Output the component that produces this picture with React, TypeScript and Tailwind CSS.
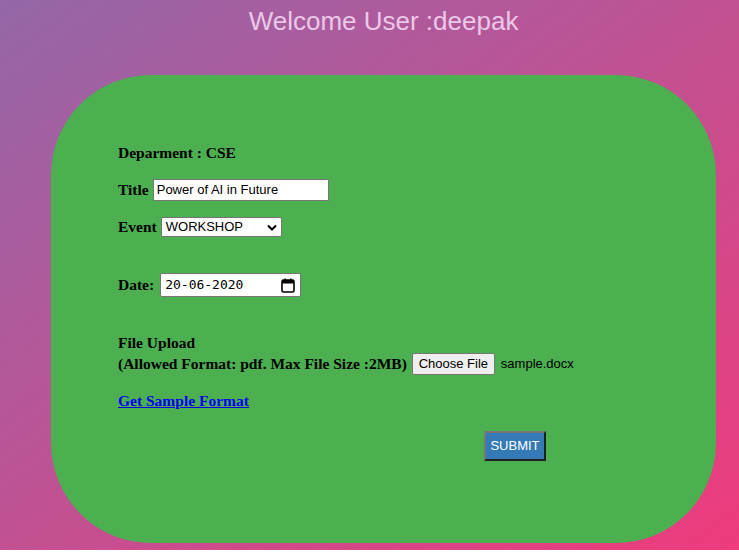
import React from "react";

const serif = { fontFamily: '"Liberation Serif", "Times New Roman", serif' };
const sans = { fontFamily: '"Liberation Sans", Arial, sans-serif' };

export default function App() {
  return (
    <div className="w-[739px] h-[553px] bg-white overflow-hidden">
      <div
        className="h-[550px] bg-[linear-gradient(to_bottom_right,#9467a8,#ee3b7c)] pt-[6px]"
        style={sans}
      >
        {/* Heading */}
        <h1 className="text-center pl-[28px] text-[26px] leading-[30px] text-[#ecc8e8]">
          Welcome User :deepak
        </h1>

        {/* Card */}
        <div className="ml-[51px] mt-[39px] w-[665px] h-[468px] bg-[#4caf50] rounded-[100px] pt-[68px] pl-[67px] font-bold text-black text-[15.5px]" style={serif}>
          <div className="h-[20px] leading-[20px]">Deparment : CSE</div>

          <div className="mt-[16px] flex items-center h-[22px]">
            <span>Title</span>
            <div className="ml-[4px] w-[176px] h-[22px] bg-white border border-[#767676] pl-[3px] text-[13px] leading-[20px] font-normal" style={sans}>
              Power of AI in Future
            </div>
          </div>

          <div className="mt-[16px] flex items-center h-[20px]">
            <span>Event</span>
            <div className="ml-[4px] w-[121px] h-[20px] bg-white border border-[#767676] rounded-[2px] pl-[4px] pr-[4px] flex items-center justify-between text-[13px] font-normal" style={sans}>
              <span>WORKSHOP</span>
              <svg width="10" height="7" viewBox="0 0 10 7">
                <path d="M1 1.5 L5 5.5 L9 1.5" stroke="#000" strokeWidth="2" fill="none" />
              </svg>
            </div>
          </div>

          <div className="mt-[36px] flex items-center h-[24px]">
            <span>Date:</span>
            <div className="ml-[6px] w-[141px] h-[24px] bg-white border border-[#767676] rounded-[2px] pl-[4px] pr-[5px] flex items-center justify-between text-[13px] font-normal" style={{ fontFamily: '"DejaVu Sans Mono", "Liberation Mono", monospace' }}>
              <span>20-06-2020</span>
              <svg width="14" height="15" viewBox="0 0 14 15">
                <rect x="1" y="2" width="12" height="12" rx="1.5" fill="none" stroke="#000" strokeWidth="1.6" />
                <rect x="1" y="2" width="12" height="3.5" fill="#000" />
                <rect x="3.5" y="0.5" width="1.5" height="3" fill="#000" />
                <rect x="9" y="0.5" width="1.5" height="3" fill="#000" />
              </svg>
            </div>
          </div>

          <div className="mt-[36px] h-[20px] leading-[20px]">File Upload</div>
          <div className="flex items-center h-[22px]">
            <span>(Allowed Format: pdf. Max File Size :2MB)</span>
            <div className="ml-[5px] w-[83px] h-[22px] bg-[#efefef] border border-[#767676] rounded-[2px] flex items-center justify-center text-[13px] font-normal" style={sans}>
              Choose File
            </div>
            <span className="ml-[6px] text-[13px] font-normal" style={sans}>
              sample.docx
            </span>
          </div>

          <div className="mt-[16px] h-[20px] leading-[20px]">
            <a className="text-[#0000ee] underline">Get Sample Format</a>
          </div>

          <div className="mt-[20px] ml-[366px] w-[62px] h-[30px] bg-[#337ab7] border-2 border-t-[#767676] border-l-[#767676] border-r-[#1f1f1f] border-b-[#1f1f1f] flex items-center justify-center text-white text-[13px] font-normal" style={sans}>
            SUBMIT
          </div>
        </div>
      </div>
    </div>
  );
}
